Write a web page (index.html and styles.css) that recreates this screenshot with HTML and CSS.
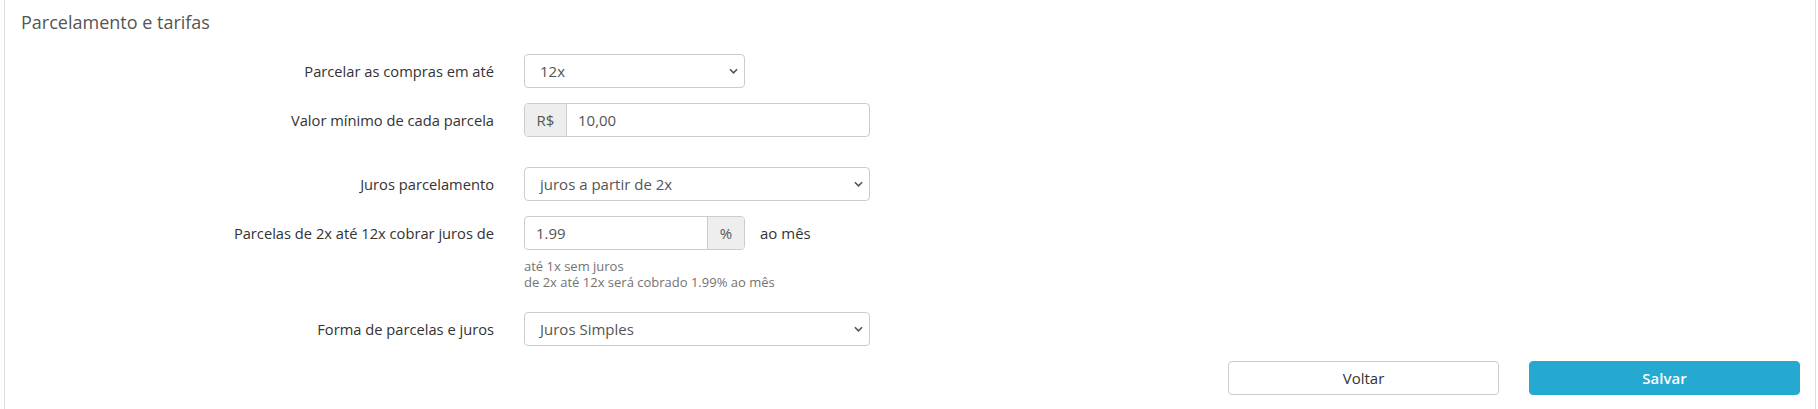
FILE: index.html
```html
<!DOCTYPE html>
<html lang="pt-BR">
<head>
<meta charset="utf-8">
<title>Parcelamento e tarifas</title>
<link rel="stylesheet" href="styles.css">
</head>
<body>
<div class="panel">
  <h3 class="panel-title">Parcelamento e tarifas</h3>
  <form class="form">
    <div class="row">
      <label class="label">Parcelar as compras em até</label>
      <div class="control">
        <div class="select narrow"><span>12x</span><svg class="chev" viewBox="0 0 10 6" width="9" height="6"><path d="M1 1l4 4 4-4" fill="none" stroke="#555" stroke-width="1.8"/></svg></div>
      </div>
    </div>
    <div class="row spaced">
      <label class="label">Valor mínimo de cada parcela</label>
      <div class="control">
        <div class="group wide">
          <span class="addon addon-left">R$</span>
          <span class="input">10,00</span>
        </div>
      </div>
    </div>
    <div class="row">
      <label class="label">Juros parcelamento</label>
      <div class="control">
        <div class="select wide"><span>juros a partir de 2x</span><svg class="chev" viewBox="0 0 10 6" width="9" height="6"><path d="M1 1l4 4 4-4" fill="none" stroke="#555" stroke-width="1.8"/></svg></div>
      </div>
    </div>
    <div class="row tight">
      <label class="label">Parcelas de 2x até 12x cobrar juros de</label>
      <div class="control">
        <div class="inline">
          <div class="group narrow">
            <span class="input">1.99</span>
            <span class="addon addon-right">%</span>
          </div>
          <span class="suffix">ao mês</span>
        </div>
        <div class="help">até 1x sem juros<br>de 2x até 12x será cobrado 1.99% ao mês</div>
      </div>
    </div>
    <div class="row">
      <label class="label">Forma de parcelas e juros</label>
      <div class="control">
        <div class="select wide"><span>Juros Simples</span><svg class="chev" viewBox="0 0 10 6" width="9" height="6"><path d="M1 1l4 4 4-4" fill="none" stroke="#555" stroke-width="1.8"/></svg></div>
      </div>
    </div>
    <div class="actions">
      <button type="button" class="btn btn-default">Voltar</button>
      <button type="button" class="btn btn-primary">Salvar</button>
    </div>
  </form>
</div>
</body>
</html>
```
FILE: styles.css
```css
* { box-sizing: border-box; }
html, body { margin: 0; padding: 0; background: #fff; }
body {
  font-family: "Open Sans", "DejaVu Sans", sans-serif;
  font-size: 15px;
  color: #333;
}
.panel {
  margin: 0 2px 0 4px;
  border-left: 1px solid #ddd;
  border-right: 1px solid #ddd;
  padding: 10px 15px 0 15px;
  height: 409px;
  overflow: hidden;
}
.panel-title {
  margin: 0 0 19px 1px;
  font-size: 18px;
  font-weight: 400;
  line-height: 25px;
  color: #555;
}
.form { display: flex; flex-direction: column; }
.row {
  display: grid;
  grid-template-columns: 474px 1fr;
  column-gap: 30px;
  margin-bottom: 15px;
}
.row.spaced { margin-bottom: 30px; }
.row.tight { margin-bottom: 22px; }
.label {
  height: 34px;
  display: flex;
  align-items: center;
  justify-content: flex-end;
  font-weight: 500;
  font-size: 14.7px;
  color: #333;
}
.control { display: flex; flex-direction: column; }
.narrow { width: 221px; }
.wide { width: 346px; }
.select {
  height: 34px;
  border: 1px solid #ccc;
  border-radius: 4px;
  display: flex;
  align-items: center;
  justify-content: space-between;
  padding: 0 6px 0 15px;
  color: #555;
  font-size: 15px;
  background: #fff;
}
.chev { display: block; }
.group {
  height: 34px;
  display: flex;
  border: 1px solid #ccc;
  border-radius: 4px;
  overflow: hidden;
}
.addon {
  background: #eee;
  color: #555;
  display: flex;
  align-items: center;
  justify-content: center;
  font-size: 15px;
}
.addon-left { width: 42px; border-right: 1px solid #ccc; }
.addon-right { width: 37px; border-left: 1px solid #ccc; }
.input {
  flex: 1;
  display: flex;
  align-items: center;
  padding: 0 11px;
  color: #555;
  font-size: 15px;
}
.inline { display: flex; align-items: center; gap: 15px; }
.suffix { font-size: 15px; color: #333; }
.help {
  margin-top: 8px;
  font-size: 13px;
  line-height: 16px;
  color: #737373;
}
.actions {
  display: flex;
  justify-content: flex-end;
  gap: 30px;
}
.btn {
  width: 271px;
  height: 34px;
  border-radius: 4px;
  font-family: "Open Sans", "DejaVu Sans", sans-serif;
  font-size: 15px;
  font-weight: 600;
  cursor: pointer;
}
.btn-default { background: #fff; border: 1px solid #ccc; color: #333; font-weight: 500; }
.btn-primary { background: #26a9d1; border: 1px solid #26a9d1; color: #fff; }
```
